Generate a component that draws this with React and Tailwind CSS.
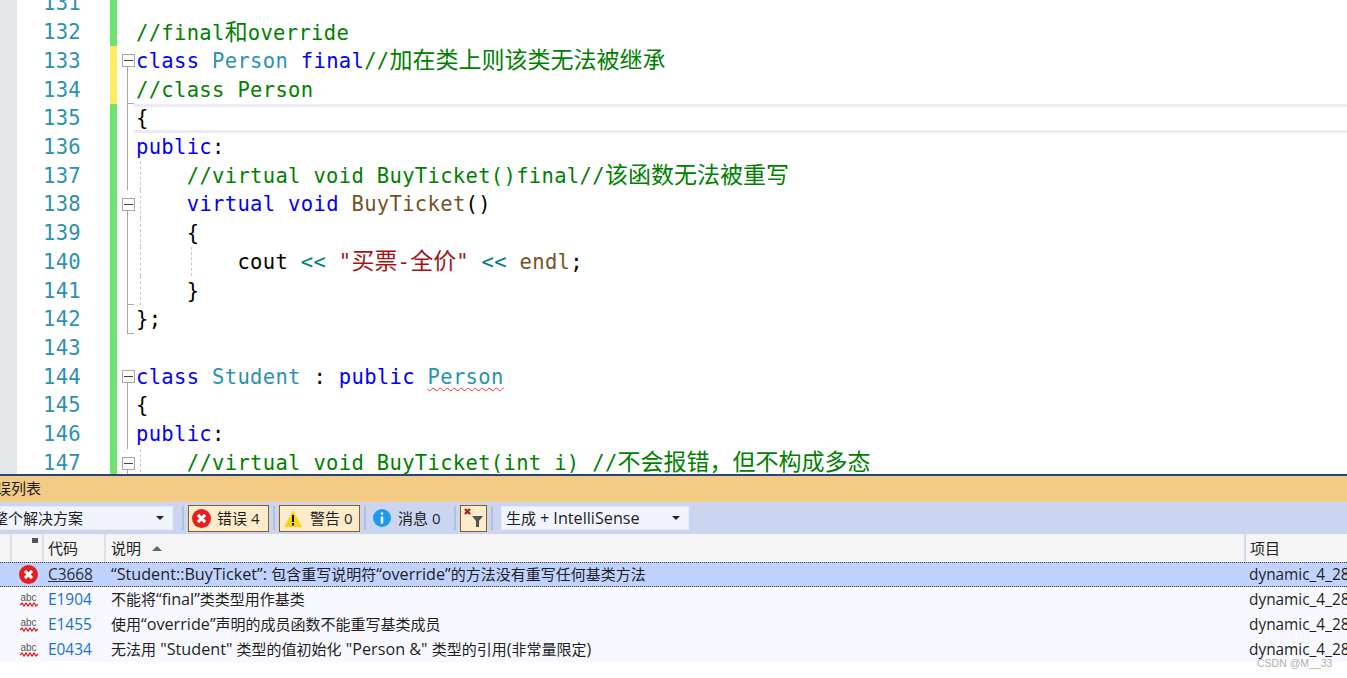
import React from 'react';

const K = ({ children }) => <span className="text-[#0000ff]">{children}</span>;
const T = ({ children }) => <span className="text-[#2b91af]">{children}</span>;
const C = ({ children }) => <span className="text-[#008000]">{children}</span>;
const F = ({ children }) => <span className="text-[#74531f]">{children}</span>;
const O = ({ children }) => <span className="text-[#008080]">{children}</span>;
const Z = ({ children }) => <span className="text-[23px] tracking-normal">{children}</span>;
const L = ({ children }) => <span className="text-[16.2px]">{children}</span>;

function Fold({ box, line, up, tick }) {
  return (
    <div className="relative w-[19px] h-full shrink-0">
      {(line || up) && (
        <div className={`absolute left-[10px] w-px bg-[#a8a8a8] bottom-0 ${up ? 'top-0' : 'top-[20px]'}`} />
      )}
      {tick && <div className="absolute left-[10px] bottom-0 w-[7px] h-px bg-[#a8a8a8]" />}
      {box && (
        <div className="absolute left-[5px] top-[8px] w-[13px] h-[13px] bg-white border border-[#a8a8a8] flex items-center justify-center">
          <div className="w-[9px] h-px bg-[#444]" />
        </div>
      )}
    </div>
  );
}

function Row({ n, bar = 'green', fold = {}, guides = [], current, children }) {
  return (
    <div className="flex h-[28.73px] items-center">
      <div className="w-[17px] h-full bg-[#e6e7e8] shrink-0" />
      <div className="w-[64px] text-right text-[#2b91af] shrink-0">{n}</div>
      <div className="w-[29px] shrink-0" />
      <div className={`w-[7px] h-full shrink-0 ${bar === 'yellow' ? 'bg-[#fdec5f]' : 'bg-[#6fe36f]'}`} />
      <Fold {...fold} />
      <div className="relative flex-1 h-full flex items-center whitespace-pre text-black">
        {current && <div className="absolute -left-[2px] right-0 top-0 bottom-0 border-y-[3px] border-[#ecebf3]" />}
        {guides.map((x) => (
          <div key={x} className="absolute top-0 bottom-0 w-0 border-l border-dashed border-[#c8c8c8]" style={{ left: x }} />
        ))}
        <span className="relative">{children}</span>
      </div>
    </div>
  );
}

function Sep() {
  return <div className="w-[2px] h-[24px] bg-[#b4bfdc] shrink-0" />;
}

function Dropdown({ className, children }) {
  return (
    <div className={`h-[24px] bg-[#f1f4fd] border border-[#e6ebf9] flex items-center justify-between ${className}`}>
      {children}
      <div className="mr-[8px] w-0 h-0 border-x-[4px] border-x-transparent border-t-[4px] border-t-[#222]" />
    </div>
  );
}

function ErrorIcon() {
  return (
    <svg width="19" height="19" viewBox="0 0 18 18" className="shrink-0">
      <circle cx="9" cy="9" r="9" fill="#e51f1f" />
      <path d="M5.6 5.6 12.4 12.4M12.4 5.6 5.6 12.4" stroke="#fff" strokeWidth="2.8" />
    </svg>
  );
}

function AbcIcon() {
  return (
    <div className="w-[19px] flex flex-col items-center shrink-0">
      <span className="text-[10px] leading-[9px] text-[#555] font-['Liberation_Sans',sans-serif]">abc</span>
      <svg width="18" height="5" viewBox="0 0 18 5">
        <path d="M0 3 2 1 4 4 6 1 8 4 10 1 12 4 14 1 16 4 18 2" fill="none" stroke="#e01010" strokeWidth="1.2" />
      </svg>
    </div>
  );
}

function ErrRow({ icon, code, selected, children }) {
  return (
    <div className={`flex h-[25px] items-center ${selected ? 'bg-[#c0d3fe] border-y border-dotted border-[#333]' : ''}`}>
      <div className="w-[43px] flex justify-end pr-[5px] shrink-0">{icon}</div>
      <div className={`w-[62px] pl-[5px] shrink-0 text-[15.4px] ${selected ? 'text-[#2a2f3a] underline' : 'text-[#1a6fd0]'}`}>{code}</div>
      <div className="flex-1 pl-[6px] whitespace-pre text-[#1e1e1e]">{children}</div>
      <div className="w-[103px] pl-[5px] text-[15.4px] text-[#1e1e1e] whitespace-pre overflow-hidden shrink-0">dynamic_4_28</div>
    </div>
  );
}

function HeadCell({ className, children }) {
  return <div className={`h-full flex items-center border-r-2 border-[#dcdfe8] shrink-0 ${className}`}>{children}</div>;
}

export default function App() {
  return (
    <div className="relative w-[1347px] h-[678px] overflow-hidden bg-white">
      <div className="h-[474px] overflow-hidden font-['DejaVu_Sans_Mono','Noto_Sans_CJK_SC',monospace] text-[20.5px] leading-[28px] tracking-[0.33px]">
        <div className="-mt-[11px]">
          <Row n={131} />
          <Row n={132}><C>//final<Z>和</Z>override</C></Row>
          <Row n={133} bar="yellow" fold={{ box: true, line: true }}><K>class</K> <T>Person</T> <K>final</K><C>//<Z>加在类上则该类无法被继承</Z></C></Row>
          <Row n={134} bar="yellow" fold={{ up: true, tick: true }}><C>//class Person</C></Row>
          <Row n={135} fold={{ up: true }} current>{'{'}</Row>
          <Row n={136} fold={{ up: true }}><K>public</K>:</Row>
          <Row n={137} fold={{ up: true }} guides={[4]}>    <C>//virtual void BuyTicket()final//<Z>该函数无法被重写</Z></C></Row>
          <Row n={138} fold={{ box: true, line: true }} guides={[4]}>    <K>virtual</K> <K>void</K> <F>BuyTicket</F>()</Row>
          <Row n={139} fold={{ up: true }} guides={[4]}>    {'{'}</Row>
          <Row n={140} fold={{ up: true }} guides={[4, 55]}>        cout <O>&lt;&lt;</O> <span className="text-[#a31515]">"<Z>买票</Z>-<Z>全价</Z>"</span> <O>&lt;&lt;</O> <F>endl</F>;</Row>
          <Row n={141} fold={{ up: true, tick: true }} guides={[4]}>    {'}'}</Row>
          <Row n={142} fold={{ up: true, tick: true }}>{'};'}</Row>
          <Row n={143} />
          <Row n={144} fold={{ box: true, line: true }}><K>class</K> <T>Student</T> : <K>public</K> <span className="text-[#2b91af] underline decoration-wavy decoration-[#e83030] decoration-1 underline-offset-[3px]">Person</span></Row>
          <Row n={145} fold={{ up: true }}>{'{'}</Row>
          <Row n={146} fold={{ up: true }}><K>public</K>:</Row>
          <Row n={147} fold={{ box: true, line: true }} guides={[4]}>    <C>//virtual void BuyTicket(int i) //<Z>不会报错，但不构成多态</Z></C></Row>
        </div>
      </div>

      <div className="font-['Open_Sans','Noto_Sans_CJK_SC',sans-serif] text-[15px] text-[#1e1e1e]">
        <div className="h-[28px] bg-[#f3cb85] border-t-[2px] border-[#27457f] flex items-center overflow-hidden pb-[2px]">
          <span className="-ml-[19px] font-['Noto_Sans_CJK_SC',sans-serif]">错误列表</span>
        </div>

        <div className="h-[32px] bg-[#ccd5f0] flex items-center overflow-hidden">
          <Dropdown className="w-[173px] shrink-0 pl-0">
            <span className="-ml-[8px] whitespace-pre font-['Noto_Sans_CJK_SC',sans-serif]">整个解决方案</span>
          </Dropdown>
          <div className="w-[9px] shrink-0" />
          <Sep />
          <div className="w-[4px] shrink-0" />
          <div className="w-[81px] h-[27px] bg-[#fdeccb] border border-[#8a5e1e] flex items-center gap-[6px] pl-[3px] shrink-0">
            <ErrorIcon />
            <span>错误 4</span>
          </div>
          <div className="w-[4px] shrink-0" />
          <Sep />
          <div className="w-[4px] shrink-0" />
          <div className="w-[81px] h-[27px] bg-[#fdeccb] border border-[#8a5e1e] flex items-center gap-[8px] pl-[4px] shrink-0">
            <svg width="18" height="17" viewBox="0 0 18 17" className="shrink-0">
              <path d="M9 0 18 17H0Z" fill="#fcd21c" />
              <path d="M9 5v7M9 13v2.4" stroke="#111" strokeWidth="2" />
            </svg>
            <span>警告 0</span>
          </div>
          <div className="w-[4px] shrink-0" />
          <Sep />
          <div className="w-[7px] shrink-0" />
          <svg width="18" height="18" viewBox="0 0 18 18" className="shrink-0">
            <circle cx="9" cy="9" r="9" fill="#1e9be8" />
            <path d="M9 3.4v2.2M9 7.4v7.2" stroke="#fff" strokeWidth="2.4" />
          </svg>
          <span className="ml-[7px] w-[56px] shrink-0">消息 0</span>
          <Sep />
          <div className="w-[4px] shrink-0" />
          <div className="w-[27px] h-[27px] bg-[#fdeccb] border border-[#8a5e1e] flex items-center justify-center shrink-0">
            <svg width="21" height="20" viewBox="0 0 21 20">
              <path d="M2 1 7 6M7 1 2 6" stroke="#a3231a" strokeWidth="2.4" />
              <path d="M9 8H20L16 13V19H13V13Z" fill="#555" />
            </svg>
          </div>
          <div className="w-[4px] shrink-0" />
          <Sep />
          <div className="w-[8px] shrink-0" />
          <Dropdown className="w-[188px] shrink-0 pl-[4px]">
            <span className="whitespace-pre">生成 <L>+ IntelliSense</L></span>
          </Dropdown>
        </div>

        <div className="h-[28px] bg-[#f5f5f5] flex items-center text-[#222]">
          <HeadCell className="w-[12px]" />
          <HeadCell className="w-[32px] relative">
            <div className="absolute right-[4px] top-[4px] w-[6px] h-[5px] bg-[radial-gradient(#555_1px,transparent_1px)] bg-[length:2px_2px]" />
          </HeadCell>
          <HeadCell className="w-[62px] pl-[4px]">代码</HeadCell>
          <div className="h-full flex-1 flex items-center border-r-2 border-[#d3d7e6] pl-[5px] gap-[11px]">
            <span>说明</span>
            <div className="w-0 h-0 border-x-[5px] border-x-transparent border-b-[5px] border-b-[#666]" />
          </div>
          <div className="w-[101px] pl-[4px] shrink-0">项目</div>
        </div>

        <ErrRow selected code="C3668" icon={<ErrorIcon />}><L>“Student::BuyTicket”: </L>包含重写说明符<L>“override”</L>的方法没有重写任何基类方法</ErrRow>
        <div className="bg-[#f8f9ff]">
          <ErrRow code="E1904" icon={<AbcIcon />}>不能将<L>“final”</L>类类型用作基类</ErrRow>
          <ErrRow code="E1455" icon={<AbcIcon />}>使用<L>“override”</L>声明的成员函数不能重写基类成员</ErrRow>
          <ErrRow code="E0434" icon={<AbcIcon />}>无法用<L> "Student" </L>类型的值初始化<L> "Person &amp;" </L>类型的引用<L>(</L>非常量限定<L>)</L></ErrRow>
        </div>
      </div>

      <div className="absolute left-[1257px] top-[656px] text-[10.5px] text-[#b0b0b0] font-['Liberation_Sans',sans-serif]">CSDN @M__33</div>
    </div>
  );
}
